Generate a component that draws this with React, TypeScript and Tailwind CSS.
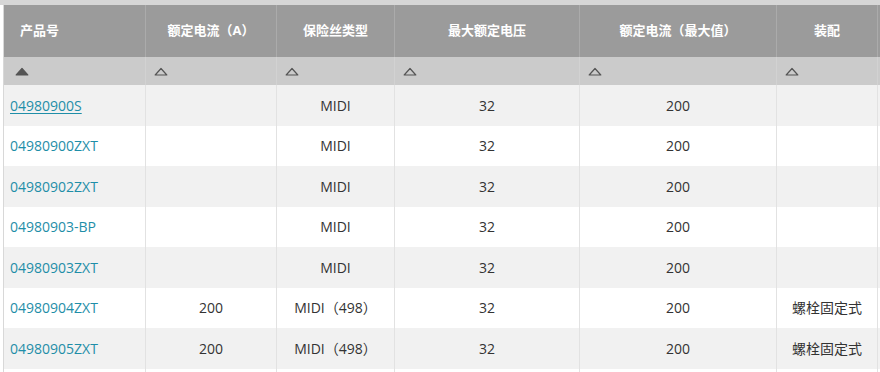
import React from "react";

const cols = ["产品号", "额定电流（A）", "保险丝类型", "最大额定电压", "额定电流（最大值）", "装配"];

const rows: string[][] = [
  ["04980900S", "", "MIDI", "32", "200", ""],
  ["04980900ZXT", "", "MIDI", "32", "200", ""],
  ["04980902ZXT", "", "MIDI", "32", "200", ""],
  ["04980903-BP", "", "MIDI", "32", "200", ""],
  ["04980903ZXT", "", "MIDI", "32", "200", ""],
  ["04980904ZXT", "200", "MIDI（498）", "32", "200", "螺栓固定式"],
  ["04980905ZXT", "200", "MIDI（498）", "32", "200", "螺栓固定式"],
  ["", "", "", "", "", ""],
];

function Tri({ filled }: { filled?: boolean }) {
  return (
    <svg width="14" height="9" viewBox="0 0 14 9" className="block">
      <path
        d="M1.2 8 L7 1.5 L12.8 8 Z"
        fill={filled ? "#555" : "none"}
        stroke="#555"
        strokeWidth="1.2"
        strokeLinejoin="round"
      />
    </svg>
  );
}

const grid = "grid grid-cols-[142px_131px_118px_185px_197px_101px]";

export default function App() {
  return (
    <div
      className="w-[880px] h-[372px] overflow-hidden bg-white"
      style={{ fontFamily: '"Open Sans", "Noto Sans CJK SC", sans-serif' }}
    >
      <div className="h-[5px] bg-[#d6d6d6]" />
      <div className="ml-[3px] border-l border-[#d8d8d8]">
        <div className={`${grid} h-[52px] bg-[#9b9b9b]`}>
          {cols.map((c, i) => (
            <div
              key={i}
              className={`flex items-center border-r border-[#ababab] text-[13px] font-bold text-white ${
                i === 0 ? "pl-[16px]" : "justify-center"
              }`}
            >
              {c}
            </div>
          ))}
        </div>
        <div className={`${grid} h-[28px] bg-[#cbcbcb]`}>
          {cols.map((_, i) => (
            <div
              key={i}
              className={`flex items-center border-r border-[#d2d2d2] ${i === 0 ? "pl-[11px]" : "pl-[8px]"}`}
            >
              <Tri filled={i === 0} />
            </div>
          ))}
        </div>
        {rows.map((r, ri) => (
          <div
            key={ri}
            className={`${grid} h-[40.5px] ${ri % 2 === 0 ? "bg-[#f1f1f1]" : "bg-white"}`}
          >
            {r.map((v, ci) => (
              <div
                key={ci}
                className={`flex items-center border-r border-[#e2e2e2] text-[14px] ${
                  ci === 0 ? "pl-[6px] text-[#1f8ea8]" : "justify-center text-[#333]"
                }`}
              >
                {ci === 0 ? (
                  <span className={ri === 0 ? "underline underline-offset-2" : ""}>{v}</span>
                ) : (
                  v
                )}
              </div>
            ))}
          </div>
        ))}
      </div>
    </div>
  );
}
